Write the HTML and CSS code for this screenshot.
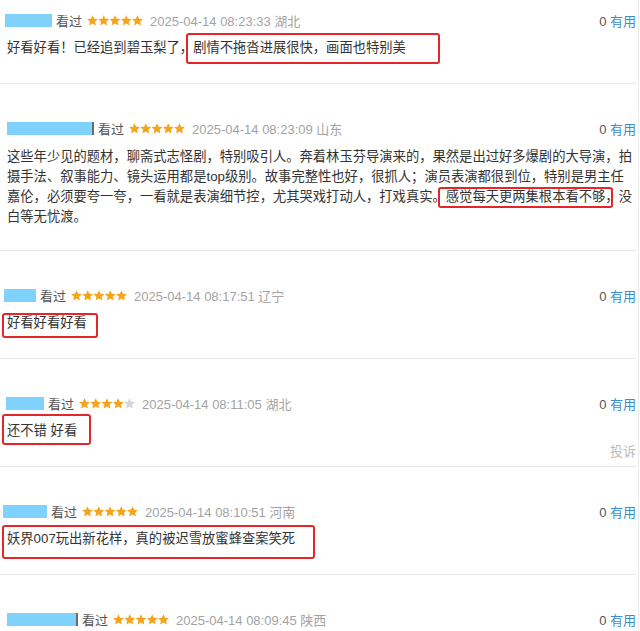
FILE: index.html
```html
<!DOCTYPE html>
<html>
<head>
    <meta charset="utf-8">
    <title>短评</title>
    <link rel="stylesheet" href="styles.css">
</head>
<body>
    <svg class="defs" width="0" height="0">
        <symbol id="star" viewBox="0 0 11 11">
            <polygon points="5.5,0.2 7.1,3.7 10.9,4.1 8.1,6.7 8.9,10.6 5.5,8.6 2.1,10.6 2.9,6.7 0.1,4.1 3.9,3.7"/>
        </symbol>
    </svg>

    <div class="comments">

        <div class="comment first">
            <div class="meta">
                <span class="name n1"></span>
                <span class="did">看过</span>
                <svg class="stars" width="56" height="11"><use href="#star" x="0" width="11" height="11"/><use href="#star" x="11.25" width="11" height="11"/><use href="#star" x="22.5" width="11" height="11"/><use href="#star" x="33.75" width="11" height="11"/><use href="#star" x="45" width="11" height="11"/></svg>
                <span class="time">2025-04-14 08:23:33 湖北</span>
                <span class="useful">0 <a href="#">有用</a></span>
            </div>
            <p class="text">好看好看！已经追到碧玉梨了，<span class="mark m1">剧情不拖沓进展很快，画面也特别美</span></p>
        </div>

        <div class="comment long">
            <div class="meta">
                <span class="name n2 cut"></span>
                <span class="did">看过</span>
                <svg class="stars" width="56" height="11"><use href="#star" x="0" width="11" height="11"/><use href="#star" x="11.25" width="11" height="11"/><use href="#star" x="22.5" width="11" height="11"/><use href="#star" x="33.75" width="11" height="11"/><use href="#star" x="45" width="11" height="11"/></svg>
                <span class="time">2025-04-14 08:23:09 山东</span>
                <span class="useful">0 <a href="#">有用</a></span>
            </div>
            <p class="text">这些年少见的题材，聊斋式志怪剧，特别吸引人。奔着林玉芬导演来的，果然是出过好多爆剧的大导演，拍摄手法、叙事能力、镜头运用都是top级别。故事完整性也好，很抓人；演员表演都很到位，特别是男主任嘉伦，必须要夸一夸，一看就是表演细节控，尤其哭戏打动人，打戏真实。<span class="mark m2">感觉每天更两集根本看不够，</span>没白等无忧渡。</p>
        </div>

        <div class="comment">
            <div class="meta">
                <span class="name n3"></span>
                <span class="did">看过</span>
                <svg class="stars" width="56" height="11"><use href="#star" x="0" width="11" height="11"/><use href="#star" x="11.25" width="11" height="11"/><use href="#star" x="22.5" width="11" height="11"/><use href="#star" x="33.75" width="11" height="11"/><use href="#star" x="45" width="11" height="11"/></svg>
                <span class="time">2025-04-14 08:17:51 辽宁</span>
                <span class="useful">0 <a href="#">有用</a></span>
            </div>
            <p class="text"><span class="mark m3">好看好看好看</span></p>
        </div>

        <div class="comment">
            <div class="meta">
                <span class="name n4"></span>
                <span class="did">看过</span>
                <svg class="stars" width="56" height="11"><use href="#star" x="0" width="11" height="11"/><use href="#star" x="11.25" width="11" height="11"/><use href="#star" x="22.5" width="11" height="11"/><use href="#star" x="33.75" width="11" height="11"/><use class="off" href="#star" x="45" width="11" height="11"/></svg>
                <span class="time">2025-04-14 08:11:05 湖北</span>
                <span class="useful">0 <a href="#">有用</a></span>
            </div>
            <p class="text"><span class="mark m4">还不错 好看</span></p>
            <a class="report" href="#">投诉</a>
        </div>

        <div class="comment">
            <div class="meta">
                <span class="name n5"></span>
                <span class="did">看过</span>
                <svg class="stars" width="56" height="11"><use href="#star" x="0" width="11" height="11"/><use href="#star" x="11.25" width="11" height="11"/><use href="#star" x="22.5" width="11" height="11"/><use href="#star" x="33.75" width="11" height="11"/><use href="#star" x="45" width="11" height="11"/></svg>
                <span class="time">2025-04-14 08:10:51 河南</span>
                <span class="useful">0 <a href="#">有用</a></span>
            </div>
            <p class="text"><span class="mark m5">妖界007玩出新花样，真的被迟雪放蜜蜂查案笑死</span></p>
        </div>

        <div class="comment last">
            <div class="meta">
                <span class="name n6 cut"></span>
                <span class="did">看过</span>
                <svg class="stars" width="56" height="11"><use href="#star" x="0" width="11" height="11"/><use href="#star" x="11.25" width="11" height="11"/><use href="#star" x="22.5" width="11" height="11"/><use href="#star" x="33.75" width="11" height="11"/><use href="#star" x="45" width="11" height="11"/></svg>
                <span class="time">2025-04-14 08:09:45 陕西</span>
                <span class="useful">0 <a href="#">有用</a></span>
            </div>
        </div>

    </div>
</body>
</html>
```

FILE: styles.css
```css
html, body {
    overflow: hidden;
}
body {
    margin: 0;
    background: #fff;
    font-family: "Liberation Sans", "Noto Sans CJK SC", sans-serif;
}
.defs {
    position: absolute;
}
.comments {
    width: 639px;
    min-height: 631px;
    box-sizing: border-box;
    border-right: 1px solid #ececec;
}
.comment {
    position: relative;
    margin-right: 2px;
    padding: 34px 0 25.5px 0;
    border-bottom: 1px solid #e8e8e8;
}
.comment.first {
    padding-top: 10px;
}
.comment.long {
    padding-bottom: 23px;
}
.comment.long .text {
    margin-top: 9px;
    line-height: 20px;
}
.comment.last {
    border-bottom: none;
}
.meta {
    display: flex;
    align-items: center;
    height: 20px;
    font-size: 13px;
    color: #a3a3a3;
    white-space: nowrap;
}
.name {
    height: 13px;
    background: #7fd2fb;
    box-sizing: border-box;
}
.name.cut {
    border-right: 2px solid #6b6b6b;
}
.n1 { margin-left: 5px; width: 47px; }
.n2 { margin-left: 7px; width: 87px; }
.n3 { margin-left: 4px; width: 32px; }
.n4 { margin-left: 6px; width: 38px; }
.n5 { margin-left: 3px; width: 44px; }
.n6 { margin-left: 7px; width: 71px; }
.did {
    margin-left: 4px;
    color: #555;
}
.stars {
    margin-left: 5px;
    fill: #f6a41c;
}
.stars .off {
    fill: #d6d6d6;
}
.time {
    margin-left: 7px;
}
.useful {
    margin-left: auto;
    color: #555;
}
.useful a {
    color: #3b8dcb;
    text-decoration: none;
}
.text {
    margin: 8px 2px 0 7px;
    font-size: 13.3px;
    line-height: 19.5px;
    color: #333;
}
.mark {
    display: inline-block;
    position: relative;
}
.mark::before {
    content: "";
    position: absolute;
    box-sizing: border-box;
    border: 2px solid #e4262b;
    border-radius: 3px;
}
.m1::before { left: -7px; top: -5px; width: 254px; height: 31px; }
.m2::before { left: -8px; top: 0; width: 175px; height: 21px; }
.m3::before { left: -5px; top: -0.5px; width: 96px; height: 25px; }
.m4::before { left: -5px; top: -7.5px; width: 89px; height: 31px; }
.m5::before { left: -5px; top: -4.5px; width: 313px; height: 34px; }
.report {
    position: absolute;
    right: 0;
    bottom: 4.5px;
    font-size: 13px;
    line-height: 20px;
    color: #bbb;
    text-decoration: none;
}
```
